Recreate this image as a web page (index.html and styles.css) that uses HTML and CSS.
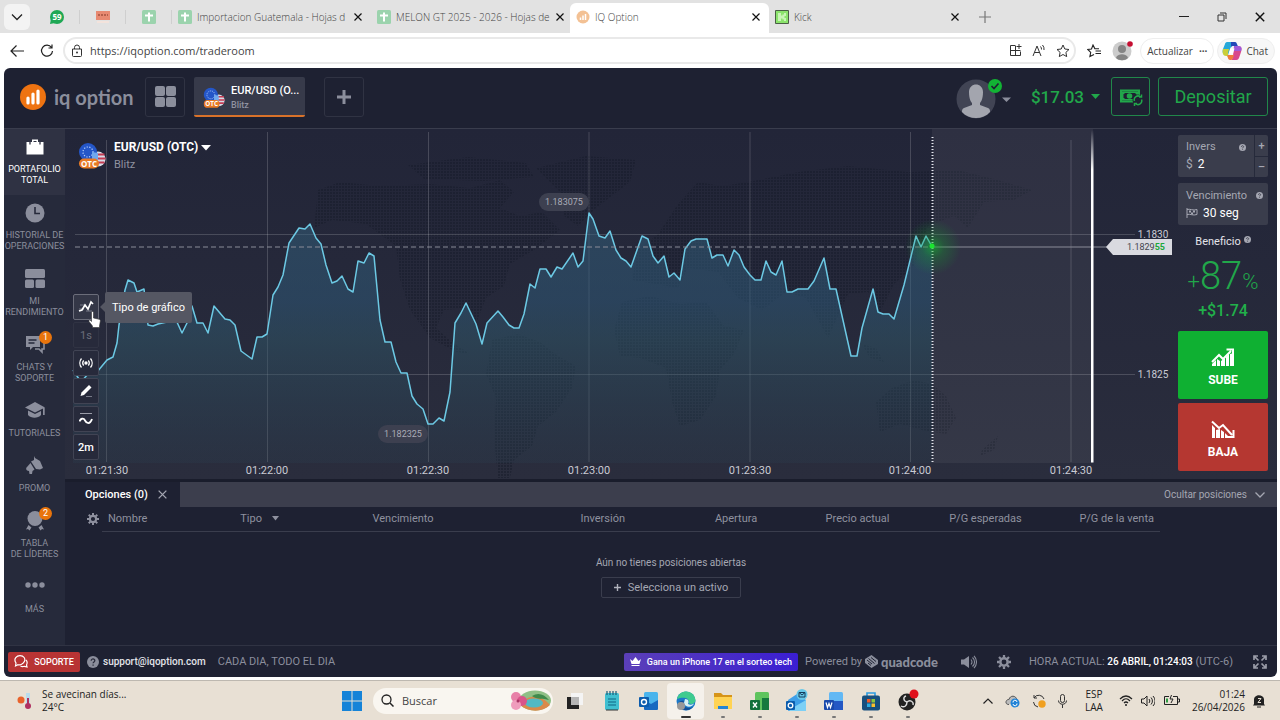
FILE: index.html
```html
<!DOCTYPE html>
<html lang="es">
<head>
  <meta charset="UTF-8" />
  <meta name="viewport" content="width=device-width, initial-scale=1.0"/>
  <title>IQ Option</title>
  <link rel="stylesheet" href="styles.css">
</head>
<body>
  <svg class="defs" width="0" height="0" aria-hidden="true">
    <symbol id="i-close" viewBox="0 0 10 10"><path d="M1.5 1.5l7 7M8.500 1.500l-7 7" fill="none" stroke="currentColor" stroke-width="1.2"/></symbol>
    <symbol id="i-sheet" viewBox="0 0 14 14"><rect width="14" height="14" rx="1.500" fill="#9bd3ad"/><path d="M7 2.500v9M3 5.500h8" stroke="#fff" stroke-width="2"/></symbol>
    <symbol id="i-help" viewBox="0 0 12 12"><circle cx="6" cy="6" r="6" fill="currentColor"/><path d="M4.200 4.800c0-2.600 3.800-2.400 3.600 0-.1 1.200-1.700 1.200-1.700 2.500M6.100 8.400v1.300" fill="none" stroke="#2b2d3d" stroke-width="1.300"/></symbol>
    <symbol id="i-gear" viewBox="0 0 16 16"><circle cx="8" cy="8" r="4.200" fill="none" stroke="currentColor" stroke-width="2.800"/><path d="M8 0v3M8 13v3M0 8h3M13 8h3M2.300 2.300l2.200 2.200M11.500 11.500l2.200 2.200M2.300 13.700l2.200-2.200M11.500 4.500l2.200-2.200" stroke="currentColor" stroke-width="2.600"/></symbol>
    <symbol id="i-otc" viewBox="0 0 28 28">
      <circle cx="20" cy="17" r="7.500" fill="#d8dbe6"/>
      <path d="M18 12.500h8.500M18 16.500h9.500M18 20.500h8.500" stroke="#c43b52" stroke-width="2"/>
      <circle cx="10" cy="10" r="9" fill="#2456c8"/>
      <circle cx="10" cy="10" r="5" fill="none" stroke="#b9d2ff" stroke-width="1.200" stroke-dasharray="1.200 1.500"/>
      <path d="M14 10l6 1v7h-6z" fill="#6fa8ee"/>
      <rect x="1" y="16.500" width="20" height="10" rx="5" fill="#e87a25"/>
    </symbol>
  </svg>

  <!-- browser tabs -->
  <div class="tabstrip">
    <button class="tab-menu" aria-label="Pestañas"><svg width="12" height="8" viewBox="0 0 12 8"><path d="M1 1.500l5 5 5-5" fill="none" stroke="#222" stroke-width="1.300"/></svg></button>
    <div class="pinned"><svg width="14" height="14" viewBox="0 0 14 14"><circle cx="7" cy="7" r="7" fill="#1fa855"/><path d="M0 14l1-5 4 4z" fill="#1fa855"/><text x="7" y="10" text-anchor="middle" class="badge-text">59</text></svg></div>
    <div class="pinned"><svg width="14" height="14" viewBox="0 0 14 14"><path d="M0 1h14v9H0z" fill="#e88a72"/><path d="M2 5h10" stroke="#b5604c" stroke-width="2" stroke-dasharray="2 1"/><path d="M1 11h12v2H1z" fill="#f3e3dc"/></svg></div>
    <div class="pinned"><svg width="14" height="14"><use href="#i-sheet"/></svg></div>
    <div class="tab">
      <svg width="14" height="14"><use href="#i-sheet"/></svg>
      <span class="tab-title">Importacion Guatemala - Hojas d</span>
      <button aria-label="Cerrar"><svg width="10" height="10"><use href="#i-close"/></svg></button>
    </div>
    <div class="tab">
      <svg width="14" height="14"><use href="#i-sheet"/></svg>
      <span class="tab-title">MELON GT 2025 - 2026 - Hojas de</span>
      <button aria-label="Cerrar"><svg width="10" height="10"><use href="#i-close"/></svg></button>
    </div>
    <div class="tab active">
      <svg width="14" height="14" viewBox="0 0 14 14"><circle cx="7" cy="7" r="6.500" fill="#f3c194"/><path d="M4.500 10V7.500M7 10V5.500M9.500 10V4" stroke="#fff" stroke-width="1.500"/></svg>
      <span class="tab-title">IQ Option</span>
      <button aria-label="Cerrar"><svg width="10" height="10"><use href="#i-close"/></svg></button>
    </div>
    <div class="tab">
      <svg width="14" height="14" viewBox="0 0 14 14"><path d="M.5.5h13v13H.5z" fill="#8be36c" stroke="#4a5f45"/><path d="M3 3h3v2.500h1.500V4.500H9V3h2v3H9.500v2H11v3H9V9.500H7.500V8.500H6V11H3z" fill="#c9f5b6"/></svg>
      <span class="tab-title">Kick</span>
      <button aria-label="Cerrar"><svg width="10" height="10"><use href="#i-close"/></svg></button>
    </div>
    <button class="new-tab" aria-label="Nueva pestaña"><svg width="12" height="12" viewBox="0 0 12 12"><path d="M6 0v12M0 6h12" stroke="#777" stroke-width="1.200"/></svg></button>
    <div class="window-controls">
      <button aria-label="Minimizar"><svg width="10" height="10"><path d="M0 4.500h10" stroke="#222"/></svg></button>
      <button aria-label="Restaurar"><svg width="10" height="10" viewBox="0 0 10 10"><path d="M1 3h6v6H1zM3 1h6v6" fill="none" stroke="#333"/></svg></button>
      <button aria-label="Cerrar ventana"><svg width="12" height="12"><use href="#i-close"/></svg></button>
    </div>
  </div>

  <div class="toolbar">
    <button aria-label="Atrás"><svg width="14" height="12" viewBox="0 0 14 12"><path d="M14 6H1M6.500.500L1 6l5.500 5.500" fill="none" stroke="#222" stroke-width="1.200"/></svg></button>
    <button aria-label="Actualizar"><svg width="14" height="14" viewBox="0 0 14 14"><path d="M11.500 3.500A5.500 5.500 0 1 0 12.500 7M12 .5v3.500H8.500" fill="none" stroke="#222" stroke-width="1.200"/></svg></button>
    <div class="address">
      <svg width="12" height="14" viewBox="0 0 12 14"><path d="M1.500 5h9v6.500a1 1 0 0 1-1 1h-7a1 1 0 0 1-1-1zM3.500 5V3.500a2.500 2.500 0 0 1 5 0V5" fill="none" stroke="#333"/><circle cx="6" cy="8.500" r="1" fill="#333"/></svg>
      <input type="text" value="https://iqoption.com/traderoom" aria-label="Dirección">
      <svg width="13" height="13" viewBox="0 0 13 13"><path d="M6 1.500H1.500v10h10V7.500M6.500 1.500v10M1.500 6.500h10M10 0v5M7.500 2.500h5" fill="none" stroke="#333"/></svg>
      <svg width="14" height="13" viewBox="0 0 14 13"><path d="M1 12L5 2l4 10M2.500 8.500h5M8.500 2.500a4 4 0 0 1 1 3M10.500 1a6 6 0 0 1 1.500 5" fill="none" stroke="#333"/></svg>
      <svg width="14" height="14" viewBox="0 0 14 14"><path d="M7 1l1.800 4 4.200.5-3.100 2.900.8 4.200L7 10.500l-3.700 2.100.8-4.200L1 5.500 5.200 5z" fill="none" stroke="#333"/></svg>
    </div>
    <button aria-label="Favoritos"><svg width="14" height="14" viewBox="0 0 14 14"><path d="M12 4.800L7.800 4.600 6 1 4.500 5 .8 5.500l2.900 2.900-.8 4.200L7 10.500M8.500 7H14M8.500 9.500H14" fill="none" stroke="#222" stroke-width="1.100"/></svg></button>
    <button class="profile" aria-label="Perfil"><svg width="22" height="20" viewBox="0 0 22 20"><circle cx="10" cy="10" r="9.500" fill="#ccc"/><circle cx="10" cy="8" r="4" fill="#858585"/><path d="M4 17c1-5 11-5 12 0-3 3-9 3-12 0z" fill="#858585"/><circle cx="18" cy="3" r="2.800" fill="#c50f32"/></svg></button>
    <button class="pill">Actualizar <b>···</b></button>
    <button class="pill chat"><svg width="20" height="18" viewBox="0 0 20 18"><path d="M5 0h7c2 0 2 2 3 4h-4c-2 0-2 1-3 3L6 13H4c-3 0-4-3-3-6l2-5c0-1 1-2 2-2z" fill="#25a7d8"/><path d="M9 0h4c2 0 2 3 3 4h-5c-1 0-2 0-2 2z" fill="#2348b8"/><path d="M1 7h6l-1 4c0 1 0 2 1 3H4c-3 0-4-3-3-7z" fill="#c9cf3a"/><path d="M12 4h4c4 0 4 3 3 6l-2 6c-1 2-2 2-4 2H8c2 0 2-1 3-4z" fill="#d8488c"/><path d="M6 13h6l-1 3c-1 2-2 2-3 2-2 0-2-3-3-4z" fill="#f07a3c"/><path d="M12 4h4c4 0 4 3 3 5h-7z" fill="#a05ad8"/><path d="M8.500 6.500h4l-1.500 5h-4z" fill="#fff"/></svg>Chat</button>
  </div>

  <div class="app">
    <header class="header">
      <a class="brand" href="#">
        <svg width="26" height="26" viewBox="0 0 26 26"><circle cx="13" cy="13" r="13" fill="#ee7311"/><path d="M8 19v-5M13 19V10M18 19V7" stroke="#fff" stroke-width="3.200" stroke-linecap="round"/></svg>
        <span>iq option</span>
      </a>
      <button class="square" aria-label="Diseño"><svg width="21" height="21" viewBox="0 0 21 21" fill="#8b8e9c"><rect width="10" height="10" rx="2"/><rect x="11" width="10" height="10" rx="2"/><rect y="11" width="10" height="10" rx="2"/><rect x="11" y="11" width="10" height="10" rx="2"/></svg></button>
      <button class="asset-tab">
        <svg width="22" height="22" viewBox="0 0 28 28"><use href="#i-otc" width="28" height="28"/><text x="11" y="24.500" text-anchor="middle" class="otc-text">OTC</text></svg>
        <span><b>EUR/USD (O...</b><small>Blitz</small></span>
      </button>
      <button class="square" aria-label="Añadir activo"><svg width="14" height="14" viewBox="0 0 14 14"><path d="M7 0v14M0 7h14" stroke="#8b8e9c" stroke-width="3"/></svg></button>
      <div class="account">
        <button class="avatar" aria-label="Cuenta">
          <svg width="56" height="44" viewBox="0 0 56 44"><circle cx="20" cy="24" r="19.500" fill="#414454"/><path d="M13 17c0-10 14-10 14 0 0 7-2 10-3 11v2l8 3c2 1 2 2 2 4-7 8-21 8-28 0 0-2 0-3 2-4l8-3v-2c-1-1-3-4-3-11z" fill="#a3a5ae"/><circle cx="39" cy="11" r="7" fill="#12b334"/><path d="M35.500 11l2.500 2.500 4.500-5" fill="none" stroke="#1e2132" stroke-width="1.700"/><path d="M46 22.500h9l-4.500 4.500z" fill="#8b8e9c"/></svg>
        </button>
        <button class="balance">$17.03 <svg width="9" height="5"><path d="M0 0h9L4.500 5z" fill="#21a74a"/></svg></button>
        <button class="outline cash" aria-label="Retirar"><svg width="24" height="18" viewBox="0 0 24 18"><path d="M1 1.500h20v7h-2V3.500H3v9h11v2H1z" fill="#21a74a"/><path d="M3 3.500h16v6h-3v3H3z" fill="#21a74a"/><path d="M6 5h10l1.500 1.500v2L15 11H6L4.500 9.500v-3z" fill="#1e2132"/><circle cx="10.500" cy="8" r="2.800" fill="#21a74a"/><circle cx="19" cy="12" r="5.500" fill="#1e2132"/><path d="M15.500 13a3.700 3.700 0 0 1 6-4M22.500 11.500a3.700 3.700 0 0 1-6 4M20 9h2.500V6.500M18 15.500h-2.500V18" fill="none" stroke="#21a74a" stroke-width="1.500"/></svg></button>
        <button class="outline deposit">Depositar</button>
      </div>
    </header>

    <div class="workspace">
      <nav class="sidebar">
        <button class="active"><svg width="20" height="20" viewBox="0 0 20 20"><path d="M7 2.500h6V5h5.500v12.500h-17V5H7zM8.500 4v1h3V4z" fill="#fff" fill-rule="evenodd"/><path d="M5 5v2.500M15 5v2.500" stroke="#2e3142" stroke-width="1.300"/></svg>PORTAFOLIO<br>TOTAL</button>
        <button><svg width="20" height="20" viewBox="0 0 20 20"><circle cx="10" cy="10" r="9.500" fill="#8b8e9c"/><path d="M10 4v6.500h5" fill="none" stroke="#262a3b" stroke-width="1.600"/></svg>HISTORIAL DE<br>OPERACIONES</button>
        <button><svg width="20" height="20" viewBox="0 0 20 20" fill="#8b8e9c"><rect width="20" height="9" rx="1.500"/><rect y="10.500" width="9" height="8.500" rx="1.500"/><rect x="10.500" y="10.500" width="9.500" height="8.500" rx="1.500"/></svg>MI<br>RENDIMIENTO</button>
        <button><svg width="20" height="20" viewBox="0 0 20 20"><path d="M1 1h14v11H8l-3 3v-3H1z" fill="#8b8e9c"/><path d="M17 6h2v8h-2v3l-3-3h-4" fill="none" stroke="#8b8e9c" stroke-width="1.600"/><path d="M3.500 5h8M3.500 8h6" stroke="#262a3b" stroke-width="1.300"/></svg>CHATS Y<br>SOPORTE<i class="badge">1</i></button>
        <button><svg width="20" height="20" viewBox="0 0 20 20" fill="#8b8e9c"><path d="M0 6.500L10 1l10 5.500L10 11.500z"/><path d="M3 9.500l7 3.500 6-3v4c-3 3.500-10 3.500-13 0z"/><path d="M18 7h1.700v7H18z"/></svg>TUTORIALES</button>
        <button><svg width="20" height="20" viewBox="0 0 20 20" fill="#8b8e9c"><path d="M9 0l1 2 5 3 3 7-3 1.500-4-.5-5-7.500L9 4zM5.500 7l4 6.500-2 1.500-.5 3H4.500L4 15c-3 0-3.500-3-2-4z"/></svg>PROMO</button>
        <button><svg width="20" height="20" viewBox="0 0 20 20" fill="#8b8e9c"><circle cx="10" cy="7.500" r="7.500"/><path d="M3.500 14l3 2.500-2 3-1.500-1.500-2 .5zM16.500 14l-3 2.500 2 3 1.500-1.500 2 .5z"/></svg>TABLA<br>DE LÍDERES<i class="badge">2</i></button>
        <button><svg width="20" height="20" viewBox="0 0 20 20" fill="#8b8e9c"><circle cx="3" cy="8" r="2.700"/><circle cx="10" cy="8" r="2.700"/><circle cx="17" cy="8" r="2.700"/></svg>MÁS</button>
      </nav>

      <main class="main">
        <section class="trade">
          <div class="chart">
            <svg class="plot" viewBox="65 129 1107 350" preserveAspectRatio="xMidYMid slice">
              <defs>
                <linearGradient id="area" gradientUnits="userSpaceOnUse" x1="0" y1="215" x2="0" y2="465">
                  <stop offset="0" stop-color="#35637f" stop-opacity=".5"/>
                  <stop offset=".35" stop-color="#2f5c7c" stop-opacity=".5"/>
                  <stop offset=".5" stop-color="#30586a" stop-opacity=".5"/>
                  <stop offset="1" stop-color="#2c4657" stop-opacity=".2"/>
                </linearGradient>
                <linearGradient id="endline" x1="0" y1="0" x2="0" y2="1">
                  <stop offset="0" stop-color="#fff" stop-opacity="0"/>
                  <stop offset=".12" stop-color="#fff"/>
                </linearGradient>
                <radialGradient id="glow">
                  <stop offset="0" stop-color="#13c22e" stop-opacity=".6"/>
                  <stop offset=".4" stop-color="#13a52e" stop-opacity=".28"/>
                  <stop offset="1" stop-color="#13a52e" stop-opacity="0"/>
                </radialGradient>
                <pattern id="dots" width="3" height="3" patternUnits="userSpaceOnUse"><rect width="2" height="2" fill="#131726" fill-opacity=".42"/></pattern>
              </defs>

              <!-- world map -->
              <g fill="url(#dots)">
                <path d="M318 190l22-8 40 4 50-2 40 4 30-8 14 12-14 16 20 8 22-4 18 18-26 20-24 14-6 22-18 12-10 26-6-16-26 2-8 18 16 14 18 12-14-2-26-14-20-28-10-30-4-34-30-22-34-4-18 8z"/>
                <path d="M408 165l60-8 58 6 8 14-50 4-60-2zM536 168l50-12 50 4-6 22-34 26-18 18-14-10-4-24z"/>
                <path d="M492 340l26-6 22 8 18 14 18 10-4 22-16 24-18 14-6 20-18 14-4 18h-12l-4-40 2-40-10-24z"/>
                <path d="M622 302l28-6 30 8 26-2 18 24 20 4-10 24-14 16-4 26-16 24-20 6-8-24-6-34-26-10-20-2-6-26z"/>
                <path d="M632 280l6-30 20-16 20-30 20-22 24 4 26-4 50-10 50-6 60 6 50-2 40 10 34 10-18 10-30 2-16 26-14-12-26 10-14 40-20 18-14 28-12-20-20 2-20 44-22-40-20-6-24 18-24-12-20-26-30-4-10 20z"/>
                <path d="M862 344l14 4 8 14-14-4zM876 402l16-14 22-8 18 4 14 12 10 22-10 16-24-4-22-6-20 8zM982 450l16-14-4 14-14 6z"/>
              </g>

              <path class="grid" d="M106.500 140v322M267.500 132v330M428.500 132v330M589 132v330M750 132v330M910.500 132v330M1071 140v322M75 234.500h1060M75 374.500h1060"/>
              <path d="M932 129h161v334H932z" fill="#fff" fill-opacity=".055"/>

              <path fill="url(#area)" d="M73 370 81 382 88 374 97 372 107 360 113 357 117 343 119 325 125 290 128 280 134 283 137 292 144 289 148 325 153 326 158 324 176 320 182 333 187 323 192 306 197 323 203 323 208 333 214 306 225 319 230 320 235 325 241 351 252 359 257 337 262 337 267 334 273 295 278 287 283 275 289 243 299 228 305 229 310 224 316 238 321 244 326 265 332 283 337 281 342 276 348 289 353 292 358 261 364 263 369 253 374 256 380 320 385 342 391 342 396 362 401 373 407 373 412 396 417 404 423 409 428 424 433 424 439 418 444 421 450 392 455 323 461 313 466 303 476 324 482 344 487 323 498 311 503 317 509 325 514 328 519 328 524 314 530 284 535 288 540 269 546 269 551 277 557 267 562 269 573 253 578 267 583 261 589 213 593 219 599 236 605 238 610 231 616 250 621 258 626 261 631 267 637 250 642 236 648 239 653 256 658 263 664 256 669 277 674 273 680 280 685 249 691 241 696 239 707 239 712 258 717 255 723 255 728 266 734 250 739 255 744 267 750 275 755 280 761 280 766 261 771 272 776 275 782 261 787 292 792 292 798 289 808 289 814 281 824 258 830 289 836 289 851 356 857 356 862 328 873 289 878 312 883 314 889 314 894 319 904 285 916 236 921 247 926 236 930 243 932 246V463H73z"/>
              <path class="price-line" d="M73 370 81 382 88 374 97 372 107 360 113 357 117 343 119 325 125 290 128 280 134 283 137 292 144 289 148 325 153 326 158 324 176 320 182 333 187 323 192 306 197 323 203 323 208 333 214 306 225 319 230 320 235 325 241 351 252 359 257 337 262 337 267 334 273 295 278 287 283 275 289 243 299 228 305 229 310 224 316 238 321 244 326 265 332 283 337 281 342 276 348 289 353 292 358 261 364 263 369 253 374 256 380 320 385 342 391 342 396 362 401 373 407 373 412 396 417 404 423 409 428 424 433 424 439 418 444 421 450 392 455 323 461 313 466 303 476 324 482 344 487 323 498 311 503 317 509 325 514 328 519 328 524 314 530 284 535 288 540 269 546 269 551 277 557 267 562 269 573 253 578 267 583 261 589 213 593 219 599 236 605 238 610 231 616 250 621 258 626 261 631 267 637 250 642 236 648 239 653 256 658 263 664 256 669 277 674 273 680 280 685 249 691 241 696 239 707 239 712 258 717 255 723 255 728 266 734 250 739 255 744 267 750 275 755 280 761 280 766 261 771 272 776 275 782 261 787 292 792 292 798 289 808 289 814 281 824 258 830 289 836 289 851 356 857 356 862 328 873 289 878 312 883 314 889 314 894 319 904 285 916 236 921 247 926 236 930 243 932 246"/>

              <path class="level" d="M75 247h857" stroke-dasharray="5 3"/>
              <path class="level" d="M932 247h176"/>
              <path d="M932.500 137v326" stroke="#e4e6ee" stroke-width="2" stroke-dasharray="1 2"/>
              <path d="M1091 130h2.500v332.500H1091z" fill="url(#endline)"/>
              <circle cx="933" cy="247" r="28" fill="url(#glow)"/>
              <circle cx="932" cy="246" r="2.500" fill="#1be52f"/>

              <g class="extreme">
                <rect x="539" y="193" width="50" height="18" rx="9"/><text x="564" y="205">1.183075</text>
                <rect x="378" y="425" width="50" height="18" rx="9"/><text x="403" y="437">1.182325</text>
              </g>
              <g class="axis">
                <text x="107" y="474">01:21:30</text><text x="267" y="474">01:22:00</text><text x="428" y="474">01:22:30</text><text x="589" y="474">01:23:00</text><text x="750" y="474">01:23:30</text><text x="910" y="474">01:24:00</text><text x="1071" y="474">01:24:30</text>
                <text class="price" x="1153" y="238">1.1830</text><text class="price" x="1153" y="378">1.1825</text>
              </g>
              <path d="M1106 247l7-8h59v16h-59z" fill="#d9dae0"/>
              <text class="quote" x="1165" y="250">1.1829<tspan>55</tspan></text>
            </svg>

            <button class="asset">
              <svg width="28" height="28" viewBox="0 0 28 28"><use href="#i-otc" width="28" height="28"/><text x="11" y="24.500" text-anchor="middle" class="otc-text">OTC</text></svg>
              <span><b>EUR/USD (OTC) <svg width="10" height="6"><path d="M0 0h10L5 5.500z" fill="#fff"/></svg></b><small>Blitz</small></span>
            </button>

            <div class="chart-tools">
              <button class="hover" aria-label="Tipo de gráfico"><svg width="16" height="16" viewBox="0 0 16 16"><path d="M2 6h6M1 10h5M8 12h6" stroke="#777a88"/><path d="M1 12l3-1 3-5 3 4 3-7 2 2" fill="none" stroke="#fff" stroke-width="1.700"/></svg></button>
              <button class="dim">1s</button>
              <button aria-label="Señales"><svg width="14" height="14" viewBox="0 0 14 14"><circle cx="7" cy="7" r="1.700" fill="#fff"/><path d="M4.700 4.500a4 4 0 0 0 0 5M9.300 4.500a4 4 0 0 1 0 5M2.500 2.500a7 7 0 0 0 0 9M11.500 2.500a7 7 0 0 1 0 9" fill="none" stroke="#fff" stroke-width="1.300"/></svg></button>
              <button aria-label="Dibujo"><svg width="14" height="14" viewBox="0 0 14 14"><path d="M1.500 12l1-3.500L10 1l2.500 2.500L5 11z" fill="#fff"/><path d="M7 12.500h6" stroke="#777a88"/></svg></button>
              <button aria-label="Indicadores"><svg width="14" height="14" viewBox="0 0 14 14"><path d="M1 1.500h12" stroke="#9a9ca8"/><path d="M.5 9.500c1-3 4-4 5.500-1s5 4.500 7-1.500" fill="none" stroke="#fff" stroke-width="1.800"/></svg></button>
              <button>2m</button>
            </div>
            <div class="tooltip">Tipo de gráfico</div>
            <svg class="pointer" width="13" height="17" viewBox="0 0 13 17"><path d="M3.500 1.500c0-1.500 2-1.500 2 0V7l5.500 1.200c1.200.3 1.500 1 1.300 2L11.500 15v1.500h-7V15L1 10.500c-.5-1 .5-2 1.500-1l1 1z" fill="#fff" stroke="#333" stroke-width=".6"/></svg>
          </div>

          <aside class="deal">
            <div class="field amount">
              <div class="field-body">
                <label for="amount">Invers <svg width="7" height="7"><use href="#i-help"/></svg></label>
                <div class="value"><span>$</span><input id="amount" type="text" value="2"></div>
              </div>
              <div class="stepper"><button>+</button><button>–</button></div>
            </div>
            <button class="field expiry">
              <span class="field-label">Vencimiento <svg width="7" height="7"><use href="#i-help"/></svg></span>
              <span class="value"><svg width="12" height="10" viewBox="0 0 12 10"><path d="M1 0v10M1 1.500c3-1 6 1.500 10 0v5c-4 1.500-7-1-10 0" fill="none" stroke="#a5a7b2"/><path d="M3 2.500h2v2H3zM7 2.500h2v2H7zM5 4.500h2v2H5z" fill="#a5a7b2"/></svg>30 seg</span>
            </button>
            <div class="profit">Beneficio <svg width="7" height="7"><use href="#i-help"/></svg></div>
            <div class="percent"><span>+</span>87<span>%</span></div>
            <div class="gain">+$1.74</div>
            <button class="trade-button up"><svg width="24" height="20" viewBox="0 0 24 20"><path d="M1 18v-2l4-4v6zM6 18v-7l3 2v5zM10 18v-5l4-3v8zM15 18V9l3-3v12zM19 18V6l4-1v13z" fill="#fff"/><path d="M1 14l7-7 4 4 8-8M15.500 1.500H22V8" fill="none" stroke="#fff" stroke-width="2"/></svg>SUBE</button>
            <button class="trade-button down"><svg width="24" height="20" viewBox="0 0 24 20"><path d="M1 18V5l3 3v10zM5 18v-8l4-1v9zM10 18v-8l3 2v6zM14 18v-5l4 4v1z" fill="#fff"/><path d="M1 1.500L8 8l4-3 9 10M22.500 10v7H16" fill="none" stroke="#fff" stroke-width="2"/></svg>BAJA</button>
          </aside>
        </section>

        <section class="positions">
          <div class="positions-bar">
            <div class="positions-tab">Opciones (0)<button aria-label="Cerrar"><svg width="11" height="11"><use href="#i-close"/></svg></button></div>
            <button class="collapse">Ocultar posiciones <svg width="10" height="6"><path d="M.5.500L5 5 9.500.500" fill="none" stroke="#a5a7b2" stroke-width="1.300"/></svg></button>
          </div>
          <div class="positions-head">
            <button aria-label="Configurar columnas"><svg width="12" height="12"><use href="#i-gear"/></svg></button>
            <table>
              <thead>
                <tr>
                  <th>Nombre</th>
                  <th>Tipo <svg width="7" height="5"><path d="M0 0h7L3.500 4.500z" fill="#8f919f"/></svg></th>
                  <th>Vencimiento</th>
                  <th class="num">Inversión</th>
                  <th class="num">Apertura</th>
                  <th class="num">Precio actual</th>
                  <th class="num">P/G esperadas</th>
                  <th class="num">P/G de la venta</th>
                </tr>
              </thead>
            </table>
          </div>
          <div class="empty">
            <p>Aún no tienes posiciones abiertas</p>
            <button><svg width="7" height="7"><path d="M3.500 0v7M0 3.500h7" stroke="#b0b2bc" stroke-width="1.400"/></svg>Selecciona un activo</button>
          </div>
        </section>
      </main>
    </div>

    <footer class="statusbar">
      <button class="support"><svg width="14" height="13" viewBox="0 0 14 13"><path d="M1.500 11l.5-3C-1 3.500 3 .7 6 .7c4 0 5.500 3 4.500 5.500S6 10.500 4 9.700zM12 5c2 2 1 4 .5 5l.5 2-2.500-.7c-2 .7-3.500 0-4-.5" fill="none" stroke="#fff" stroke-width="1.200"/></svg>SOPORTE</button>
      <a class="mail" href="#"><svg width="12" height="12"><use href="#i-help"/></svg>support@iqoption.com</a>
      <span class="muted">CADA DIA, TODO EL DIA</span>
      <a class="promo" href="#"><svg width="11" height="9" viewBox="0 0 11 9"><path d="M0 2l2.500 2L5.500 0l3 4L11 2 9.500 7h-8zM1.500 8h8v1h-8z" fill="#fff"/></svg>Gana un iPhone 17 en el sorteo tech</a>
      <span class="powered">Powered by <svg width="13" height="13" viewBox="0 0 13 13"><path d="M6.500 0L13 5v4l-6.500 4L0 8V4z" fill="#8b8e9c"/><path d="M2 5l5 4M3.500 3.500l6 5M6 2.500l5 4M3 8l3 2.500" stroke="#1e2132"/></svg><b>quadcode</b></span>
      <button class="sound" aria-label="Sonido"><svg width="16" height="14" viewBox="0 0 16 14"><path d="M0 4.500h3L8 1v12L3 9.500H0z" fill="#8b8e9c"/><path d="M10 4.500a4 4 0 0 1 0 5M11.500 2.500a6 6 0 0 1 0 9M13 .8a9 9 0 0 1 0 12.400" fill="none" stroke="#8b8e9c" stroke-width="1.100"/></svg></button>
      <button aria-label="Ajustes"><svg width="14" height="14"><use href="#i-gear"/></svg></button>
      <span class="clock">HORA ACTUAL: <b>26 ABRIL, 01:24:03</b> (UTC-6)</span>
      <button aria-label="Pantalla completa"><svg width="14" height="14" viewBox="0 0 14 14"><path d="M1 5V1h4M1 1l4.500 4.500M9 1h4v4M13 1L8.500 5.500M1 9v4h4M1 13l4.500-4.500M13 9v4H9M13 13L8.500 8.500" fill="none" stroke="#9a9ca8" stroke-width="1.700"/></svg></button>
    </footer>
  </div>

  <div class="taskbar">
    <div class="weather">
      <svg width="16" height="18" viewBox="0 0 16 18"><circle cx="4" cy="8" r="3.500" fill="#e8632c"/><path d="M9 1h4v11H9z" fill="#b9dcec"/><circle cx="11" cy="14" r="3" fill="#b03060"/><path d="M10 6h2v8h-2z" fill="#b03060"/></svg>
      <div>Se avecinan días...<br>24°C</div>
    </div>
    <div class="apps">
      <button aria-label="Inicio"><svg width="20" height="20" viewBox="0 0 20 20" fill="#1583d8"><path d="M0 0h9.500v9.500H0zM10.500 0H20v9.500h-9.500zM0 10.500h9.500V20H0zM10.500 10.500H20V20h-9.500z"/></svg></button>
      <label class="search">
        <svg width="13" height="13" viewBox="0 0 13 13"><circle cx="5.500" cy="5.500" r="4.500" fill="none" stroke="#222" stroke-width="1.300"/><path d="M9 9l3.500 3.500" stroke="#222" stroke-width="1.500"/></svg>
        <input type="text" placeholder="Buscar">
        <svg width="42" height="21" viewBox="0 0 42 21"><ellipse cx="25" cy="10.500" rx="16" ry="10" fill="#8fbf86"/><path d="M10 15c8-12 22-10 30 0-8 8-22 7-30 0z" fill="#d98a4a"/><ellipse cx="24" cy="13" rx="9" ry="4.500" fill="#52b9c4"/><path d="M22 6c6-4 12-2 17 4-6-2-12 0-17-4z" fill="#3f8a4c"/><circle cx="6" cy="7" r="5" fill="#e880a8"/><circle cx="12" cy="11" r="5" fill="#d9558a"/><circle cx="6" cy="15" r="5" fill="#ef9cbc"/><circle cx="8" cy="11" r="1.500" fill="#a83464"/></svg>
      </label>
      <button aria-label="Vista de tareas"><svg width="18" height="18" viewBox="0 0 18 18"><path d="M1 5h12v12H1z" fill="#222"/><path d="M5 1h12v12H5z" fill="#f4f4f4"/><path d="M5 5h8v8H5z" fill="#b5b5b5"/></svg></button>
      <button aria-label="Bloc de notas"><svg width="16" height="20" viewBox="0 0 16 20"><rect x="1" y="2" width="14" height="17" rx="1.500" fill="#3fbfd0"/><path d="M3 0v4M6 0v4M9 0v4M12 0v4" stroke="#1d5a78" stroke-width="1.200"/><path d="M4 8h8M4 11h8M4 14h8" stroke="#0f6684" stroke-width="1.200"/><path d="M2 19h12" stroke="#333"/></svg></button>
      <button aria-label="Outlook"><svg width="20" height="20" viewBox="0 0 20 20"><rect x="5" y="1" width="14" height="17" rx="1.500" fill="#4ab4ec"/><path d="M5 9l7 4 7-4v9a1 1 0 0 1-1 1H6a1 1 0 0 1-1-1z" fill="#1769c0"/><rect y="6" width="10" height="10" rx="1" fill="#0b5cad"/><circle cx="5" cy="11" r="2.500" fill="none" stroke="#fff" stroke-width="1.400"/></svg></button>
      <button class="current" aria-label="Edge"><svg width="20" height="20" viewBox="0 0 20 20"><circle cx="10" cy="10" r="9.500" fill="#1b78c8"/><path d="M1 8C3-2 18-2 19.500 9c0 4-5 5-7 3 2-4-4-7-11.500-4z" fill="#3ecb8f"/><path d="M8 10c-3 5 3 9 9 6-4 5-14 4-15-3 1-3 4-4 6-3z" fill="#125098"/><path d="M9 8c4 0 4 3 3 5 2 1 5 1 6-1-1 5-9 5-10 0z" fill="#d7f2f4"/><circle cx="5" cy="15" r="4" fill="#999"/></svg></button>
      <button class="open" aria-label="Explorador"><svg width="20" height="18" viewBox="0 0 20 18"><path d="M1 1h7l2 2h9v14H1z" fill="#d69419"/><path d="M1 5h18v12H1z" fill="#ffd353"/><path d="M5 14h10v3H5z" fill="#2584d4"/></svg></button>
      <button class="open" aria-label="Excel"><svg width="20" height="20" viewBox="0 0 20 20"><rect x="5" y="1" width="14" height="18" rx="1.500" fill="#5fc45e"/><path d="M12 7h7v12h-7z" fill="#157a3e"/><rect y="9" width="10" height="10" rx="1" fill="#12703a"/><path d="M3 11.500l4 5M7 11.500l-4 5" stroke="#fff" stroke-width="1.400"/></svg></button>
      <button class="open" aria-label="Outlook"><svg width="22" height="24" viewBox="0 0 22 24"><path d="M2 11l9-6 9 6v10a1 1 0 0 1-1 1H3a1 1 0 0 1-1-1z" fill="#3e9fe8"/><path d="M3 21l17-10v11H4z" fill="#7dd0f6"/><rect y="12" width="9" height="9" rx="1" fill="#0b5cad"/><circle cx="4.500" cy="16.500" r="2.300" fill="none" stroke="#fff" stroke-width="1.300"/><circle cx="16" cy="5.500" r="5.500" fill="#68c8e8"/><path d="M13 3.500h6V8h-6zM13 3.500L16 6l3-2.500" fill="none" stroke="#143c5c"/></svg></button>
      <button class="open" aria-label="Word"><svg width="20" height="20" viewBox="0 0 20 20"><rect x="5" y="1" width="14" height="18" rx="1.500" fill="#62b8f4"/><path d="M5 10h14v9H5z" fill="#2458c4"/><rect y="9" width="10" height="10" rx="1" fill="#1a4aac"/><path d="M2 11.500l1.500 5 1.500-4 1.500 4 1.500-5" fill="none" stroke="#fff" stroke-width="1.200"/></svg></button>
      <button class="open" aria-label="Tienda"><svg width="20" height="20" viewBox="0 0 20 20"><path d="M6 5V2h8v3" fill="none" stroke="#2b9be0" stroke-width="1.600"/><rect x="1" y="4.500" width="18" height="15" rx="2" fill="#174f7e"/><path d="M6 8h3.500v3.500H6z" fill="#f05a28"/><path d="M10.500 8H14v3.500h-3.500z" fill="#8cc63f"/><path d="M6 12.500h3.500V16H6z" fill="#29abe2"/><path d="M10.500 12.500H14V16h-3.500z" fill="#fbc02d"/></svg></button>
      <button class="open" aria-label="OBS"><svg width="22" height="24" viewBox="0 0 22 24"><circle cx="10" cy="13" r="8.500" fill="#222"/><path d="M10 13c-4-1-4-5-1-6M10 13c3-3 7 0 6 3M10 13c0 4-3 6-6 4" fill="none" stroke="#ddd" stroke-width="1.400"/><circle cx="17" cy="5" r="4.500" fill="#e0101c"/></svg></button>
    </div>
    <div class="tray">
      <svg width="10" height="6"><path d="M.5 5.500L5 1l4.500 4.500" fill="none" stroke="#222" stroke-width="1.200"/></svg>
      <svg width="15" height="14" viewBox="0 0 15 14"><path d="M4 10.500C-1 10.500 1 5 4 5.500 5 1 11 1 12 6" fill="#bbb" stroke="#555"/><circle cx="10" cy="9" r="4.500" fill="#1f82d6"/><path d="M8 8.500a2 2 0 0 1 4-.5M12 9.500a2 2 0 0 1-4 .5" fill="none" stroke="#fff"/></svg>
      <svg width="14" height="14" viewBox="0 0 14 14"><path d="M12 5A5.500 5.500 0 0 0 2 4V1M2 4h3M1.500 8a5.500 5.500 0 0 0 4.500 5" fill="none" stroke="#333"/><circle cx="10" cy="10" r="3.700" fill="#f0a020"/></svg>
      <svg width="9" height="14" viewBox="0 0 9 14"><rect x="2.500" y=".5" width="4" height="8" rx="2" fill="none" stroke="#333"/><path d="M.5 6.500c0 5 8 5 8 0M4.500 10.500V14" fill="none" stroke="#333"/></svg>
      <span class="tray-text lang">ESP<br>LAA</span>
      <svg width="14" height="11" viewBox="0 0 14 11"><path d="M1 4c4-4 8-4 12 0M3 6c3-3 5-3 8 0M5 8c1.500-1.500 2.500-1.500 4 0" fill="none" stroke="#222" stroke-width="1.200"/><circle cx="7" cy="10" r="1" fill="#222"/></svg>
      <svg class="near" width="14" height="12" viewBox="0 0 14 12"><path d="M.5 4h2.500l3-3v10L3 8H.5zM8 4a3 3 0 0 1 0 4M10 2.500a5 5 0 0 1 0 7M12 1a7 7 0 0 1 0 10" fill="none" stroke="#222"/></svg>
      <svg class="near" width="17" height="11" viewBox="0 0 17 11"><path d="M6 1.500H1.500v8h13v-8H10M15 4h1.500v3H15" fill="none" stroke="#222"/><path d="M3 3.500h2v4H3z" fill="#2f9e44"/><path d="M8.500 0L7 4h3L8 8" fill="none" stroke="#222"/></svg>
      <span class="tray-text date">01:24<br>26/04/2026</span>
      <svg class="near" width="12" height="14" viewBox="0 0 12 14"><path d="M1 10V6c0-6 9-6 10-1v5l1 1.500H0zM4 12.500h4v1H4z" fill="#222"/><path d="M5 4.500h3l-3 4h3" fill="none" stroke="#e8e0d4"/></svg>
    </div>
  </div>
</body>
</html>
```

FILE: styles.css
```css
* {
  margin: 0;
  padding: 0;
  box-sizing: border-box;
}

body {
  min-height: 100vh;
  display: flex;
  flex-direction: column;
  background-color: #fff;
  font-family: Roboto, 'Liberation Sans', sans-serif;
  font-size: 11px;
  color: #a5a7b2;
}

button, input {
  font: inherit;
  color: inherit;
  background: none;
  border: none;
  outline: none;
}

button {
  display: flex;
  align-items: center;
  justify-content: center;
  cursor: pointer;
}

a {
  color: inherit;
  text-decoration: none;
}

svg {
  flex: none;
}

.defs {
  position: absolute;
}

.otc-text, .badge-text {
  font: bold 8px 'Open Sans', sans-serif;
  fill: #fff;
}

/* browser */
.tabstrip, .toolbar, .taskbar {
  font-family: 'Open Sans', 'Noto Sans', sans-serif;
}

.tabstrip {
  display: flex;
  align-items: center;
  height: 33px;
  padding: 0 1px 0 4px;
  background-color: #e2e2e2;
  font-size: 10px;
  font-weight: 300;
  color: #444;
}

.tab-menu {
  width: 26px;
  height: 26px;
  margin-right: 4px;
  border-radius: 6px;
  background-color: #f3f3f3;
}

.pinned {
  display: flex;
  justify-content: center;
  width: 46px;
  border-right: 1px solid #cfcfcf;
}

.pinned svg {
  overflow: visible;
}

.tab {
  display: flex;
  align-items: center;
  flex: 0 1 199px;
  min-width: 0;
  height: 30px;
  align-self: flex-end;
  padding: 0 8px 3px 6px;
  gap: 5px;
}

.tab.active {
  background-color: #fff;
  border-radius: 6px 6px 0 0;
}

.tab-title {
  flex: 1;
  white-space: nowrap;
}

.tab button {
  color: #111;
}

.new-tab {
  width: 34px;
  height: 24px;
}

.window-controls {
  display: flex;
  margin-left: auto;
  color: #111;
}

.window-controls button {
  width: 38px;
  height: 30px;
}

.toolbar {
  display: flex;
  align-items: center;
  height: 35px;
  padding: 0 5px 0 2px;
  font-size: 11px;
  color: #444;
}

.toolbar > button {
  width: 30px;
  height: 26px;
}

.address {
  display: flex;
  align-items: center;
  flex: 1;
  gap: 10px;
  height: 27px;
  margin: 0 3px 0 1px;
  padding: 0 4px 0 6px;
  border: 2px solid #e9e9e9;
  border-radius: 14px;
}

.address input {
  flex: 1;
  min-width: 0;
  margin-left: -3px;
  font-size: 11px;
}

.toolbar .profile {
  width: 28px;
}

.toolbar .pill {
  width: auto;
  gap: 6px;
  margin-left: 3px;
  padding: 0 6px;
  border: 1px solid #eee;
  border-radius: 13px;
  font-size: 10px;
}

.toolbar .chat {
  gap: 4px;
  padding: 0 6px 0 4px;
  background-color: #f7f7f7;
}

/* trading app */
.app {
  display: flex;
  flex-direction: column;
  flex: 1;
  margin: 0 3px 3px 4px;
  border-radius: 6px;
  overflow: hidden;
  background-color: #1e2132;
}

.header {
  display: flex;
  align-items: center;
  height: 61px;
  padding: 0 9px 3px 16px;
  border-bottom: 1px solid #3a3d4d;
}

.brand {
  display: flex;
  align-items: center;
  gap: 8px;
  width: 125px;
  font: bold 20px Lato, sans-serif;
  color: #8b8e9c;
}

.square {
  width: 40px;
  height: 40px;
  border: 1px solid #303343;
  border-radius: 3px;
}

.asset-tab {
  justify-content: flex-start;
  gap: 6px;
  width: 111px;
  height: 40px;
  margin: 0 19px 0 9px;
  padding: 4px 0 0 9px;
  background-color: #373a4a;
  border-bottom: 2px solid #d9722a;
  border-radius: 2px;
  text-align: left;
}

.asset-tab b, .asset-tab small {
  display: block;
  line-height: 14px;
  white-space: nowrap;
}

.asset-tab b {
  color: #fff;
  font-weight: 500;
}

.asset-tab small {
  font-size: 9px;
  font-weight: 500;
  color: #9092a0;
}

.account {
  display: flex;
  align-items: center;
  margin-left: auto;
}

.balance {
  gap: 7px;
  margin: 0 11px 0 19px;
  font-size: 17px;
  font-weight: 500;
  color: #21a74a;
}

.outline {
  height: 39px;
  border: 1px solid #21874a;
  border-radius: 3px;
  color: #21a74a;
}

.cash {
  width: 39px;
  margin-right: 8px;
}

.deposit {
  width: 110px;
  font-size: 18px;
}

.workspace {
  display: flex;
  flex: 1;
}

.sidebar {
  flex: 0 0 61px;
  background-color: #262a3b;
}

.sidebar button {
  position: relative;
  display: block;
  width: 100%;
  padding: 8px 0 9px;
  font-size: 9px;
  line-height: 11px;
  color: #8b8e9c;
  text-align: center;
  white-space: nowrap;
}

.sidebar button svg {
  display: block;
  margin: 0 auto 7px;
}

.sidebar .active {
  background-color: #2f3243;
  color: #fff;
}

.badge {
  position: absolute;
  top: 4px;
  right: 13px;
  width: 13px;
  height: 13px;
  border-radius: 50%;
  background-color: #e8740c;
  color: #fff;
  font-size: 9px;
  line-height: 13px;
  font-style: normal;
}

.main {
  display: flex;
  flex-direction: column;
  flex: 1;
  min-width: 0;
}

.trade {
  display: flex;
  flex: 1;
  background: linear-gradient(to bottom, #222538, #2a2d3d);
}

.chart {
  position: relative;
  flex: 1;
  min-width: 0;
}

.plot {
  position: absolute;
  width: 100%;
  height: 100%;
}

.grid {
  fill: none;
  stroke: #fff;
  stroke-opacity: 0.17;
}

.price-line {
  fill: none;
  stroke: #6cc9e4;
  stroke-width: 1.5;
  stroke-linejoin: round;
}

.level {
  stroke: #8a8c98;
}

.extreme rect {
  fill: #3d4050;
}

.extreme text, .axis text {
  text-anchor: middle;
}

.extreme text {
  font-size: 9px;
  fill: #a9abb6;
}

.axis text {
  font-size: 11px;
  fill: #c9cad3;
}

.axis .price {
  font-size: 10px;
}

.quote {
  font-size: 9px;
  text-anchor: end;
  fill: #44464f;
}

.quote tspan {
  fill: #1ca83a;
  font-weight: bold;
}

.asset {
  position: absolute;
  top: 9px;
  left: 13px;
  gap: 8px;
  text-align: left;
}

.asset b, .asset small {
  display: block;
  line-height: 18px;
}

.asset b {
  font-size: 12px;
  color: #fff;
}

.asset small {
  font-size: 11px;
  color: #9092a0;
}

.chart-tools {
  position: absolute;
  top: 165px;
  left: 8px;
  display: flex;
  flex-direction: column;
  gap: 2px;
}

.chart-tools button {
  width: 26px;
  height: 26px;
  border: 1px solid #414454;
  border-radius: 2px;
  background-color: #272a3b;
  font-weight: 500;
  color: #fff;
}

.chart-tools .hover {
  border-color: #6b6d7a;
  background-color: #343747;
}

.chart-tools .dim {
  border-color: #303343;
  font-weight: 400;
  color: #6b6d7a;
}

.tooltip {
  position: absolute;
  top: 163px;
  left: 40px;
  padding: 0 7px;
  border-radius: 2px;
  background-color: #555763;
  color: #fff;
  line-height: 31px;
}

.tooltip::before {
  content: '';
  position: absolute;
  top: 10px;
  left: -5px;
  border: 5px solid transparent;
  border-left-width: 0;
  border-right-color: #555763;
}

.pointer {
  position: absolute;
  top: 182px;
  left: 23px;
}

.deal {
  display: flex;
  flex-direction: column;
  flex: 0 0 105px;
  padding: 6px 9px 8px 6px;
}

.field {
  border-radius: 2px;
  background-color: #3a3d4c;
  height: 42px;
  margin-bottom: 6px;
  font-size: 11px;
}

.amount {
  display: flex;
}

.field-body {
  flex: 1;
  min-width: 0;
  padding: 3px 8px;
}

.field label, .field-label {
  display: flex;
  align-items: center;
  justify-content: space-between;
  line-height: 18px;
}

.value {
  display: flex;
  align-items: center;
  gap: 5px;
  font-size: 12px;
  line-height: 17px;
}

.value input {
  width: 100%;
  color: #fff;
}

.stepper {
  width: 14px;
  border-left: 1px solid #262a3b;
}

.stepper button {
  width: 100%;
  height: 21px;
  font-weight: 500;
}

.stepper button + button {
  border-top: 1px solid #262a3b;
}

.expiry {
  display: block;
  padding: 3px 5px 3px 8px;
}

.expiry .value {
  color: #fff;
}

.profit {
  display: flex;
  justify-content: center;
  gap: 3px;
  line-height: 21px;
  color: #e3e4e9;
}

.profit svg {
  margin-top: 5px;
  color: #a5a7b2;
}

.percent {
  text-align: center;
  font-size: 38px;
  font-weight: 300;
  line-height: 48px;
  white-space: nowrap;
  color: #21a74a;
}

.percent span {
  font-size: 22px;
  line-height: 22px;
}

.gain {
  margin-bottom: auto;
  text-align: center;
  font-size: 16px;
  font-weight: 500;
  line-height: 22px;
  color: #21b04a;
}

.trade-button {
  flex-direction: column;
  gap: 5px;
  height: 68px;
  margin-top: 4px;
  padding-top: 4px;
  border-radius: 2px;
  font-size: 12px;
  font-weight: bold;
  color: #fff;
}

.up {
  background-color: #0fb032;
}

.down {
  background-color: #b53731;
}

.positions {
  height: 166px;
  border-top: 3px solid #1a1d2c;
}

.positions-bar {
  display: flex;
  justify-content: space-between;
  height: 25px;
  padding-right: 12px;
  background-color: #3c3e4d;
}

.positions-tab {
  display: flex;
  align-items: center;
  gap: 9px;
  padding: 0 12px 0 20px;
  background-color: #1e2132;
  font-weight: 500;
  color: #fff;
}

.positions-tab button {
  color: #a5a7b2;
}

.collapse {
  gap: 8px;
}

.positions-head {
  display: flex;
  padding: 0 117px 0 22px;
}

.positions-head button {
  margin-right: 3px;
  color: #8f919f;
}

.positions-head table {
  width: 100%;
  table-layout: fixed;
  border-collapse: collapse;
}

.positions-head th {
  height: 24px;
  padding: 0 6px;
  border-bottom: 1px solid #3a3d4d;
  font-weight: 400;
  text-align: left;
  white-space: nowrap;
  color: #8f919f;
}

.positions-head th svg {
  margin: 0 0 1px 7px;
}

.positions-head .num {
  text-align: right;
}

.empty {
  display: flex;
  flex-direction: column;
  align-items: center;
  gap: 6px;
  padding-top: 23px;
}

.empty p {
  line-height: 16px;
}

.empty button {
  gap: 7px;
  height: 21px;
  padding: 0 12px;
  border: 1px solid #3a3d4d;
  border-radius: 2px;
}

.empty p, .collapse {
  font-size: 10px;
}

.statusbar {
  display: flex;
  align-items: center;
  height: 32px;
  padding: 0 10px 0 4px;
  border-top: 1px solid #303343;
  color: #8b8e9c;
  white-space: nowrap;
}

.support {
  gap: 6px;
  width: 72px;
  height: 20px;
  border-radius: 2px;
  background-color: #b83434;
  font-size: 9px;
  font-weight: 500;
  color: #fff;
}

.mail {
  display: flex;
  align-items: center;
  gap: 4px;
  margin: 0 12px 0 7px;
  font-size: 10px;
  font-weight: 500;
  color: #e3e4e9;
}

.mail svg {
  color: #8b8e9c;
}

.promo {
  display: flex;
  align-items: center;
  gap: 6px;
  height: 18px;
  margin-left: auto;
  padding: 0 6px;
  border-radius: 2px;
  background: linear-gradient(to right, #5b3fb8, #3a1ed2);
  font-size: 9px;
  font-weight: 500;
  color: #fff;
}

.powered {
  display: flex;
  align-items: center;
  gap: 3px;
  margin: 0 23px 0 7px;
}

.powered b {
  font: 900 13px Lato, sans-serif;
}

.sound {
  margin-right: 20px;
}

.clock {
  margin: 0 20px 0 18px;
}

.clock b {
  font-size: 10px;
  font-weight: 500;
  color: #fff;
}

/* windows taskbar */
.taskbar {
  display: flex;
  align-items: center;
  height: 40px;
  padding: 0 15px 0 17px;
  border-top: 1px solid #bdb8b0;
  background-color: #e8e0d4;
  font-size: 10px;
  line-height: 13px;
  color: #222;
}

.weather {
  display: flex;
  align-items: center;
  gap: 9px;
  flex: 0 0 316px;
}

.apps {
  display: flex;
  align-items: center;
}

.apps button {
  position: relative;
  width: 37px;
  height: 36px;
}

.apps .current {
  border-radius: 4px;
  background-color: #f5f1eb;
}

.apps .open::after, .apps .current::after {
  content: '';
  position: absolute;
  bottom: 1px;
  width: 4px;
  height: 2px;
  border-radius: 1px;
  background-color: #777;
}

.apps .current::after {
  width: 10px;
  background-color: #333;
}

.search {
  display: flex;
  align-items: center;
  gap: 8px;
  width: 180px;
  height: 26px;
  margin: 0 3px;
  padding: 0 1px 0 8px;
  border-radius: 13px;
  background-color: #f9f6f0;
}

.search input {
  flex: 1;
  min-width: 0;
  font-size: 11px;
}

.search input::placeholder {
  color: #444;
}

.tray {
  display: flex;
  align-items: center;
  gap: 12px;
  margin-left: auto;
}

.tray .near {
  margin-left: -4px;
}

.tray-text {
  text-align: center;
}

.tray .lang {
  margin: 0 4px 0 6px;
}

.tray .date {
  text-align: right;
}
```
